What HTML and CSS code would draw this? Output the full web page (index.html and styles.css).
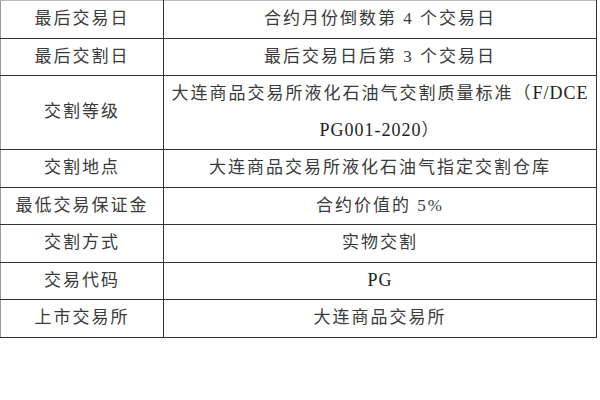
FILE: index.html
```html
<!DOCTYPE html>
<html lang="zh-CN">
<head>
<meta charset="utf-8">
<link rel="stylesheet" href="styles.css">
</head>
<body>
<table class="spec">
  <tr><td class="k">最后交易日</td><td class="v">合约月份倒数第 4 个交易日</td></tr>
  <tr><td class="k">最后交割日</td><td class="v">最后交易日后第 3 个交易日</td></tr>
  <tr><td class="k">交割等级</td><td class="v">大连商品交易所液化石油气交割质量标准（<span class="lat">F/DCE</span><br><span class="lat">PG001-2020</span>）</td></tr>
  <tr><td class="k">交割地点</td><td class="v">大连商品交易所液化石油气指定交割仓库</td></tr>
  <tr><td class="k">最低交易保证金</td><td class="v">合约价值的 5%</td></tr>
  <tr><td class="k">交割方式</td><td class="v">实物交割</td></tr>
  <tr><td class="k">交易代码</td><td class="v"><span class="lat">PG</span></td></tr>
  <tr><td class="k">上市交易所</td><td class="v">大连商品交易所</td></tr>
</table>
</body>
</html>
```

FILE: styles.css
```css
html, body {
  margin: 0;
  padding: 0;
  background: #fff;
}
.spec {
  border-collapse: collapse;
  width: 597px;
  table-layout: fixed;
  font-family: "Liberation Serif", "Noto Sans CJK SC", serif;
  font-size: 17px;
  color: #3a3a3a;
  letter-spacing: 2px;
}
.spec td {
  border: 1px solid #333;
  text-align: center;
  vertical-align: middle;
  line-height: 36.5px;
  padding: 0;
}
.spec tr:first-child td {
  border-top-color: #bbb;
}
.spec td.k {
  width: 162px;
  border-left-color: #999;
}
.lat {
  font-size: 18px;
  line-height: 1;
  color: #222;
  letter-spacing: 1px;
}
```
